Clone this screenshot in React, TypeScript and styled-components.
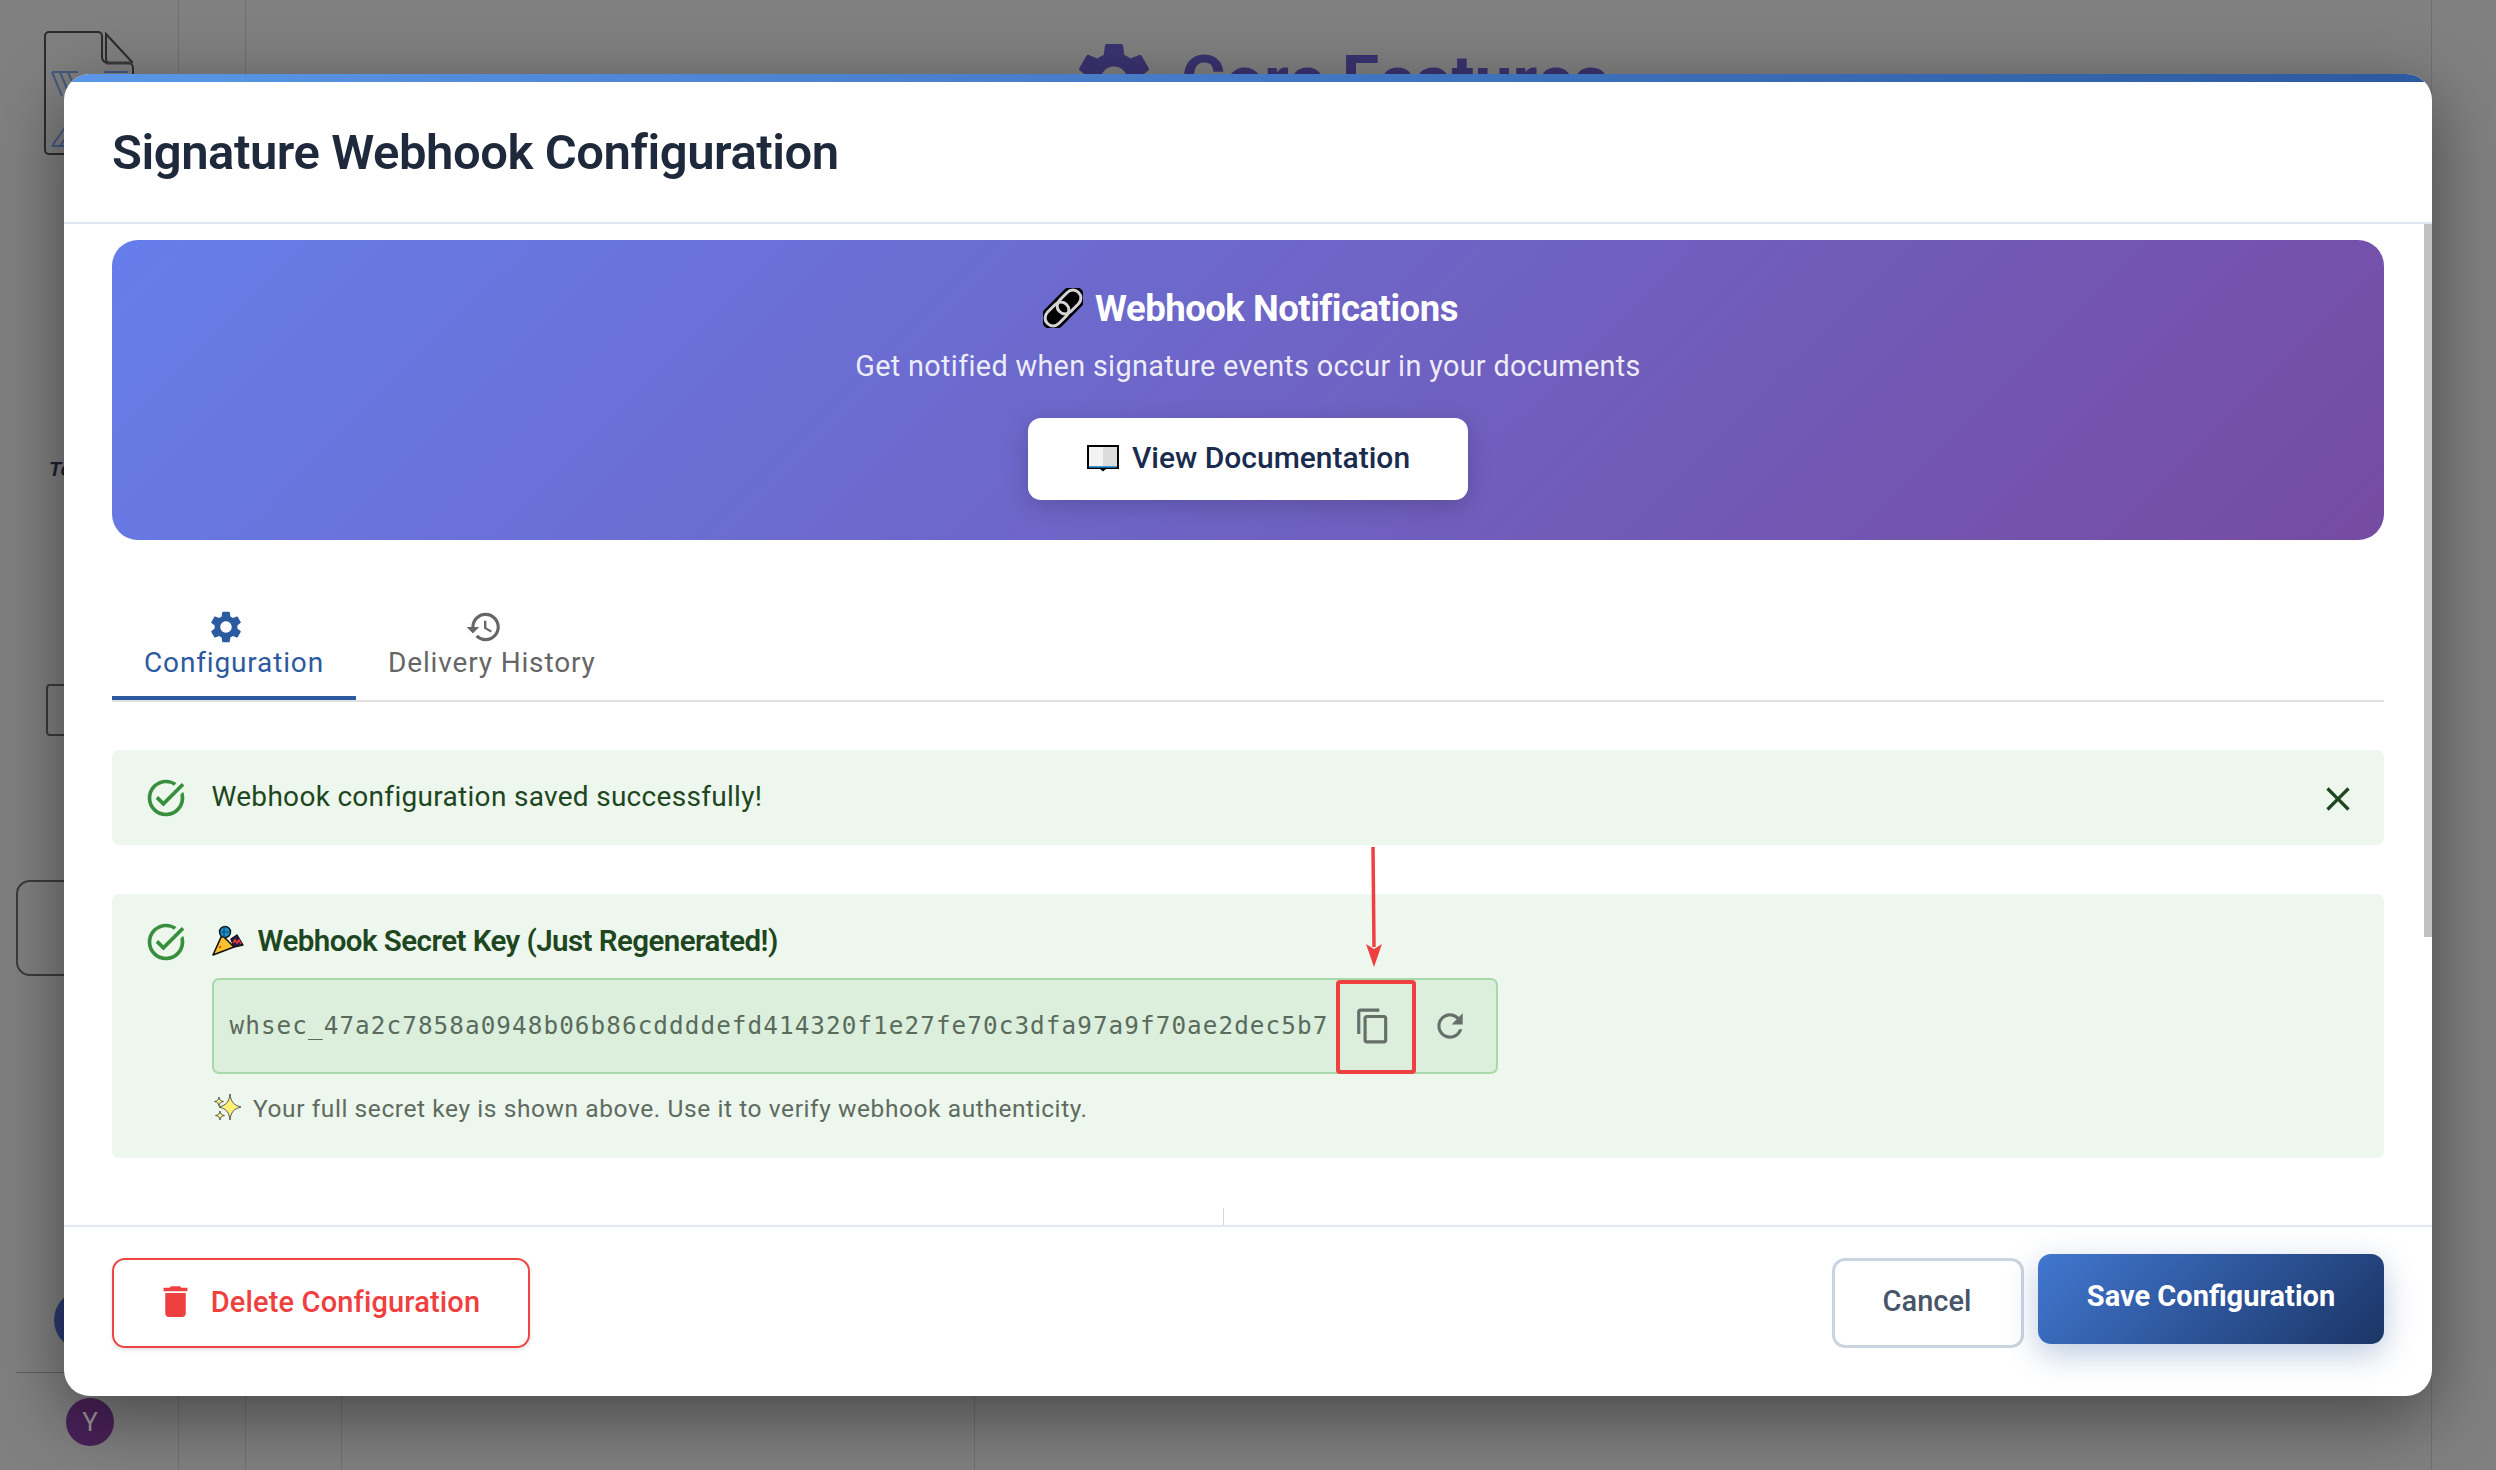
import * as React from "react";
import styled, { createGlobalStyle } from "styled-components";

const SANS = `Roboto, "Liberation Sans", sans-serif`;

const Global = createGlobalStyle`
  html, body { margin: 0; padding: 0; background: #808080; }
  * { box-sizing: border-box; }
`;

const paths = {
  settings:
    "M19.14 12.94c.04-.3.06-.61.06-.94 0-.32-.02-.64-.07-.94l2.03-1.58c.18-.14.23-.41.12-.61l-1.92-3.32c-.12-.22-.37-.29-.59-.22l-2.39.96c-.5-.38-1.03-.7-1.62-.94l-.36-2.54c-.04-.24-.24-.41-.48-.41h-3.84c-.24 0-.43.17-.47.41l-.36 2.54c-.59.24-1.13.57-1.62.94l-2.39-.96c-.22-.08-.47 0-.59.22L2.74 8.87c-.12.21-.08.47.12.61l2.03 1.58c-.05.3-.09.63-.09.94s.02.64.07.94l-2.03 1.58c-.18.14-.23.41-.12.61l1.92 3.32c.12.22.37.29.59.22l2.39-.96c.5.38 1.03.7 1.62.94l.36 2.54c.05.24.24.41.48.41h3.84c.24 0 .44-.17.47-.41l.36-2.54c.59-.24 1.13-.56 1.62-.94l2.39.96c.22.08.47 0 .59-.22l1.92-3.32c.12-.22.07-.47-.12-.61l-2.01-1.58zM12 15.6c-1.98 0-3.6-1.62-3.6-3.6s1.62-3.6 3.6-3.6 3.6 1.62 3.6 3.6-1.62 3.6-3.6 3.6z",
  history:
    "M13 3c-4.97 0-9 4.03-9 9H1l3.89 3.89.07.14L9 12H6c0-3.87 3.13-7 7-7s7 3.13 7 7-3.13 7-7 7c-1.93 0-3.68-.79-4.94-2.06l-1.42 1.42C8.27 19.99 10.51 21 13 21c4.97 0 9-4.03 9-9s-4.03-9-9-9zm-1 5v5l4.28 2.54.72-1.21-3.5-2.08V8H12z",
  taskAlt:
    "M22 5.18 10.59 16.6l-4.24-4.24 1.41-1.41 2.83 2.83 10-10L22 5.18zm-2.21 5.04c.13.57.21 1.17.21 1.78 0 4.42-3.58 8-8 8s-8-3.58-8-8 3.58-8 8-8c1.58 0 3.04.46 4.28 1.25l1.44-1.44C16.1 2.67 14.13 2 12 2 6.48 2 2 6.48 2 12s4.48 10 10 10 10-4.48 10-10c0-1.19-.22-2.33-.6-3.39l-1.61 1.61z",
  close:
    "M19 6.41 17.59 5 12 10.59 6.41 5 5 6.41 10.59 12 5 17.59 6.41 19 12 13.41 17.59 19 19 17.59 13.41 12z",
  copy: "M16 1H4c-1.1 0-2 .9-2 2v14h2V3h12V1zm3 4H8c-1.1 0-2 .9-2 2v14c0 1.1.9 2 2 2h11c1.1 0 2-.9 2-2V7c0-1.1-.9-2-2-2zm0 16H8V7h11v14z",
  refresh:
    "M17.65 6.35C16.2 4.9 14.21 4 12 4c-4.42 0-7.99 3.58-7.99 8s3.57 8 7.99 8c3.73 0 6.84-2.55 7.73-6h-2.08c-.82 2.33-3.04 4-5.65 4-3.31 0-6-2.69-6-6s2.69-6 6-6c1.66 0 3.14.69 4.22 1.78L13 11h7V4l-2.35 2.35z",
  trash: "M6 19c0 1.1.9 2 2 2h8c1.1 0 2-.9 2-2V7H6v12zM19 4h-3.5l-1-1h-5l-1 1H5v2h14V4z",
};

const Icon: React.FC<{ name: keyof typeof paths; size: number; color: string }> = ({ name, size, color }) => (
  <svg width={size} height={size} viewBox="0 0 24 24" fill={color} style={{ flexShrink: 0, display: "block" }}>
    <path d={paths[name]} />
  </svg>
);

const LinkGlyph = () => (
  <svg width="40" height="40" viewBox="0 0 40 40" style={{ display: "block" }}>
    <g transform="rotate(-45 20 20)" fill="none">
      <rect x="-6" y="8" width="52" height="24" rx="12" fill="#000" />
      <rect x="-2" y="12" width="27" height="16" rx="8" stroke="#d4d4d4" strokeWidth="3" />
      <rect x="15" y="12" width="27" height="16" rx="8" stroke="#d4d4d4" strokeWidth="3" />
    </g>
  </svg>
);

const BookGlyph = () => (
  <svg width="34" height="28" viewBox="0 0 34 28" style={{ display: "block" }}>
    <path d="M1 1h32v24H20l-3 2.500-3-2.500H1z" fill="#000" />
    <path d="M3 3h14v19H3z" fill="#f3f3f3" />
    <path d="M17 3h14v19H17z" fill="#dcdcdc" />
    <path d="M3 22h28v1.600H3z" fill="#3b9be0" />
  </svg>
);

const PartyGlyph = () => (
  <svg width="32" height="32" viewBox="0 0 32 32" style={{ display: "block" }}>
    <path d="M10 10 1 30l21-8z" fill="#fbc02d" stroke="#111" strokeWidth="1.6" strokeLinejoin="round" />
    <circle cx="13" cy="7" r="5.500" fill="#1d8fc9" stroke="#111" strokeWidth="1.400" />
    <path d="M12 1v12M7.500 7h11" stroke="#0c4f75" strokeWidth="1.200" />
    <path d="M19 14l6-4 6 10-9 2z" fill="#2a1c4a" stroke="#111" strokeWidth="1.400" strokeLinejoin="round" />
    <path d="M21 18l2-3 2 3 2-3 2 4" fill="none" stroke="#e53935" strokeWidth="1.600" />
    <circle cx="8" cy="22" r="1.200" fill="#e65100" />
  </svg>
);

const SparkGlyph = () => (
  <svg width="30" height="30" viewBox="0 0 30 30" style={{ display: "block" }}>
    <path
      d="M18 1c1 8 3.500 11 11 13-7.500 2-10 5-11 13-1-8-3.500-11-11-13 7.500-2 10-5 11-13z"
      fill="#fff176"
      stroke="#555"
      strokeWidth="1"
    />
    <path d="M7 4c.5 3 1.500 4 4.500 4.500C8.500 9 7.500 10 7 13c-.5-3-1.500-4-4.500-4.500C5.500 8 6.500 7 7 4z" fill="#fff176" stroke="#555" strokeWidth="1" />
    <path d="M8 18c.5 3 1.500 4 4.500 4.500-3 .5-4 1.500-4.500 4.500-.5-3-1.500-4-4.500-4.500 3-.5 4-1.500 4.500-4.500z" fill="#fff176" stroke="#555" strokeWidth="1" />
  </svg>
);

const Page = styled.div`
  position: relative;
  width: 2496px;
  height: 1470px;
  overflow: hidden;
  padding: 74px 64px 0;
  background: #808080;
  font-family: ${SANS};
`;

/* the dimmed page behind the dialog */
const Behind = styled.div`
  position: absolute;
  inset: 0;
`;

const VLine = styled.div<{ $x: number; $top?: number }>`
  position: absolute;
  left: ${(p) => p.$x}px;
  top: ${(p) => p.$top ?? 0}px;
  bottom: 0;
  width: 1px;
  background: #6d7078;
`;

const BgHeading = styled.div`
  position: absolute;
  left: 1181px;
  top: 36px;
  font-size: 68px;
  line-height: 90px;
  font-weight: 700;
  color: #3a3370;
  white-space: nowrap;
`;

const BgGear = styled.div`
  position: absolute;
  left: 1069px;
  top: 35px;
`;

const DocIcon = styled.svg`
  position: absolute;
  left: 40px;
  top: 28px;
`;

const BgBox = styled.div<{ $x: number; $y: number; $w: number; $h: number; $r: number }>`
  position: absolute;
  left: ${(p) => p.$x}px;
  top: ${(p) => p.$y}px;
  width: ${(p) => p.$w}px;
  height: ${(p) => p.$h}px;
  border-radius: ${(p) => p.$r}px;
  border: 2px solid #3b3b3b;
`;

const BgText = styled.div`
  position: absolute;
  left: 49px;
  top: 458px;
  font: italic 700 20px "Liberation Sans", sans-serif;
  color: #1c2230;
`;

const BgBlueDot = styled.div`
  position: absolute;
  left: 54px;
  top: 1290px;
  width: 60px;
  height: 60px;
  border-radius: 50%;
  background: #2c3b70;
`;

const BgRule = styled.div`
  position: absolute;
  left: 16px;
  top: 1372px;
  width: 60px;
  height: 1px;
  background: #5f5f5f;
`;

const Avatar = styled.div`
  position: absolute;
  left: 66px;
  top: 1398px;
  width: 48px;
  height: 48px;
  border-radius: 50%;
  background: #4a2159;
  color: #9a9a9a;
  font-size: 26px;
  display: flex;
  align-items: center;
  justify-content: center;
`;

const Dialog = styled.div`
  position: relative;
  width: 2368px;
  height: 1322px;
  display: flex;
  flex-direction: column;
  background: #fff;
  border-radius: 26px;
  overflow: hidden;
  box-shadow: 0 20px 70px rgba(0, 0, 0, 0.45);
`;

const TopBar = styled.div`
  height: 8px;
  flex-shrink: 0;
  background: linear-gradient(90deg, #5b96e8, #2c5aa0);
`;

const Header = styled.header`
  height: 142px;
  flex-shrink: 0;
  display: flex;
  align-items: center;
  padding: 2px 48px 0;
  border-bottom: 2px solid #e2e8f0;
`;

const Title = styled.h2`
  margin: 0;
  font-size: 49px;
  font-weight: 600;
  letter-spacing: -0.45px;
  color: #1e293b;
  line-height: 1.2;
`;

const Body = styled.div`
  position: relative;
  flex: 1;
  padding: 16px 48px 0;
  overflow: hidden;
`;

const ScrollThumb = styled.div`
  position: absolute;
  top: 0;
  right: 0;
  width: 8px;
  height: 713px;
  background: #c1c1c1;
`;

const Hero = styled.section`
  height: 300px;
  border-radius: 26px;
  background: linear-gradient(135deg, #667eea 0%, #764ba2 100%);
  color: #fff;
  display: flex;
  flex-direction: column;
  align-items: center;
  padding-top: 44px;
`;

const HeroTitle = styled.div`
  display: flex;
  align-items: center;
  gap: 12px;
  height: 48px;
  margin-left: 5px;
  font-size: 36.5px;
  font-weight: 700;
  letter-spacing: -0.5px;
`;

const HeroSub = styled.div`
  margin-top: 12px;
  font-size: 28.8px;
  line-height: 44px;
  letter-spacing: 0.33px;
  color: rgba(255, 255, 255, 0.9);
`;

const DocsButton = styled.div`
  margin-top: 30px;
  width: 440px;
  height: 82px;
  padding-bottom: 3px;
  border-radius: 13px;
  background: #fff;
  color: #1a2c4e;
  font-size: 30px;
  font-weight: 500;
  display: flex;
  align-items: center;
  justify-content: center;
  gap: 12px;
  box-shadow: 0 6px 24px rgba(0, 0, 0, 0.18);
`;

const TabBar = styled.div`
  margin-top: 47px;
  height: 115px;
  display: flex;
  border-bottom: 2px solid #e0e0e0;
`;

const Tab = styled.div<{ $active?: boolean }>`
  height: 113px;
  padding: 21px 32px 0;
  display: flex;
  flex-direction: column;
  align-items: center;
  font-size: 28px;
  line-height: 40px;
  letter-spacing: 0.85px;
  color: ${(p) => (p.$active ? "#2c5aa0" : "#666")};
  border-bottom: ${(p) => (p.$active ? "4px solid #2c5aa0" : "none")};
`;

const TabIcon = styled.div`
  margin: 0 16px -3px 0;
`;

const Alert = styled.div`
  margin-top: 48px;
  height: 95px;
  border-radius: 7px;
  background: #edf7ed;
  color: #1e4620;
  display: flex;
  align-items: flex-start;
  padding: 0 26px 0 32px;
`;

const AlertIcon = styled.div`
  margin-top: 26px;
  margin-right: 23.5px;
`;

const AlertText = styled.div`
  flex: 1;
  margin-top: 28px;
  font-size: 28px;
  line-height: 38px;
  letter-spacing: 0.3px;
`;

const AlertClose = styled.div`
  margin-top: 29px;
`;

const KeyPanel = styled(Alert)`
  height: 264px;
  margin-top: 49px;
`;

const KeyContent = styled.div`
  display: flex;
  flex-direction: column;
`;

const KeyTitle = styled.div`
  margin-top: 27px;
  height: 40px;
  display: flex;
  align-items: center;
  gap: 14px;
  font-size: 29.5px;
  font-weight: 600;
  letter-spacing: -0.55px;
  color: #1e4620;
`;

const KeyBox = styled.div`
  position: relative;
  margin-top: 17px;
  width: 1286px;
  height: 96px;
  display: flex;
  align-items: center;
  padding: 0 0 2px 16px;
  background: #dcefdd;
  border: 2px solid #a9d9ab;
  border-radius: 7px;
`;

const KeyValue = styled.div`
  font-family: "DejaVu Sans Mono", monospace;
  font-size: 24.3px;
  letter-spacing: 1.07px;
  color: #5a6b5c;
  white-space: nowrap;
`;

const KeyAction = styled.div`
  position: absolute;
  top: 0;
  bottom: 0;
  width: 76px;
  display: flex;
  align-items: center;
  justify-content: center;
`;

const CopyAction = styled(KeyAction)`
  left: 1121.5px;
`;

const RefreshAction = styled(KeyAction)`
  left: 1198px;
`;

const Highlight = styled.div`
  position: absolute;
  left: 1122px;
  top: 0;
  width: 80px;
  height: 94px;
  border: 4.5px solid #ef4040;
  border-radius: 4px;
`;

const Arrow = styled.svg`
  position: absolute;
  left: 1146px;
  top: -133px;
`;

const Hint = styled.div`
  margin-top: 17px;
  display: flex;
  align-items: center;
  gap: 11.5px;
  height: 34px;
  font-size: 24.5px;
  letter-spacing: 0.58px;
  color: #5f6b60;
`;

const Tick = styled.div`
  position: absolute;
  left: 1159px;
  bottom: 0;
  width: 1px;
  height: 17px;
  background: #d6d6d6;
`;

const Footer = styled.footer`
  height: 171px;
  flex-shrink: 0;
  border-top: 2px solid #e2e8f0;
  display: flex;
  align-items: flex-start;
  padding: 0 48px;
`;

const DeleteButton = styled.div`
  margin-top: 31px;
  width: 418px;
  height: 90px;
  padding: 0 7px 3px 0;
  border-radius: 13px;
  border: 2.5px solid #ef4444;
  color: #ef4040;
  font-size: 29px;
  font-weight: 500;
  letter-spacing: 0.15px;
  display: flex;
  align-items: center;
  justify-content: center;
  gap: 15px;
  box-shadow: 0 2px 4px rgba(0, 0, 0, 0.12);
`;

const FooterRight = styled.div`
  margin-left: auto;
  display: flex;
  gap: 14px;
  align-items: flex-start;
`;

const CancelButton = styled.div`
  margin-top: 31px;
  width: 192px;
  height: 90px;
  padding: 0 2px 4px 0;
  border-radius: 13px;
  border: 3px solid #cbd5e1;
  color: #475569;
  font-size: 29px;
  font-weight: 500;
  display: flex;
  align-items: center;
  justify-content: center;
`;

const SaveButton = styled.div`
  margin-top: 27px;
  width: 346px;
  height: 90px;
  border-radius: 13px;
  background: linear-gradient(135deg, #4177d0, #1b3566);
  color: #fff;
  font-size: 29px;
  font-weight: 700;
  display: flex;
  align-items: center;
  justify-content: center;
  padding-bottom: 6px;
  box-shadow: 0 10px 32px rgba(44, 90, 160, 0.32);
`;

export default function App() {
  return (
    <Page>
      <Global />
      <Behind>
        <VLine $x={178} />
        <VLine $x={245} />
        <VLine $x={341} $top={1396} />
        <VLine $x={974} $top={1396} />
        <VLine $x={2431} />
        <BgGear>
          <Icon name="settings" size={90} color="#3a3370" />
        </BgGear>
        <BgHeading>Core Features</BgHeading>
        <DocIcon width="96" height="136" viewBox="0 0 96 136" fill="none">
          <path d="M9 4h49a4 4 0 0 1 4 4v21a6 6 0 0 0 6 6h20a5 5 0 0 1 5 5v81a5 5 0 0 1-5 5H9a4 4 0 0 1-4-4V8a4 4 0 0 1 4-4z" stroke="#2c2c2c" strokeWidth="2" />
          <path d="M66 6l26 28a1 1 0 0 1-1 1H70a4 4 0 0 1-4-4z" stroke="#2c2c2c" strokeWidth="2" />
          <path d="M66 35h26" stroke="#3a3a3a" strokeWidth="3" />
          <path d="M12 44h26M12 44l10 24M20 44l10 24M28 44l10 24M12 118l14-20M12 118h20M20 118l14-20M64 44h24" stroke="#465a80" strokeWidth="2" />
        </DocIcon>
        <BgText>To</BgText>
        <BgBox $x={46} $y={684} $w={40} $h={52} $r={4} />
        <BgBox $x={16} $y={880} $w={60} $h={96} $r={14} />
        <BgBlueDot />
        <BgRule />
        <Avatar>Y</Avatar>
      </Behind>

      <Dialog>
        <TopBar />
        <Header>
          <Title>Signature Webhook Configuration</Title>
        </Header>
        <Body>
          <ScrollThumb />
          <Hero>
            <HeroTitle>
              <LinkGlyph />
              Webhook Notifications
            </HeroTitle>
            <HeroSub>Get notified when signature events occur in your documents</HeroSub>
            <DocsButton>
              <BookGlyph />
              View Documentation
            </DocsButton>
          </Hero>

          <TabBar>
            <Tab $active>
              <TabIcon>
                <Icon name="settings" size={38} color="#2c5aa0" />
              </TabIcon>
              Configuration
            </Tab>
            <Tab>
              <TabIcon>
                <Icon name="history" size={38} color="#666" />
              </TabIcon>
              Delivery History
            </Tab>
          </TabBar>

          <Alert>
            <AlertIcon>
              <Icon name="taskAlt" size={44} color="#388e3c" />
            </AlertIcon>
            <AlertText>Webhook configuration saved successfully!</AlertText>
            <AlertClose>
              <Icon name="close" size={40} color="#1e4620" />
            </AlertClose>
          </Alert>

          <KeyPanel>
            <AlertIcon>
              <Icon name="taskAlt" size={44} color="#388e3c" />
            </AlertIcon>
            <KeyContent>
              <KeyTitle>
                <PartyGlyph />
                Webhook Secret Key (Just Regenerated!)
              </KeyTitle>
              <KeyBox>
                <KeyValue>whsec_47a2c7858a0948b06b86cddddefd414320f1e27fe70c3dfa97a9f70ae2dec5b7</KeyValue>
                <CopyAction>
                  <Icon name="copy" size={38} color="#66706a" />
                </CopyAction>
                <RefreshAction>
                  <Icon name="refresh" size={38} color="#66706a" />
                </RefreshAction>
                <Highlight />
                <Arrow width="30" height="120" viewBox="0 0 30 120">
                  <path d="M13 0l1 100" stroke="#ef4040" strokeWidth="3.500" fill="none" />
                  <path d="M6 97l8 5 8-5-8 23z" fill="#ef4040" />
                </Arrow>
              </KeyBox>
              <Hint>
                <SparkGlyph />
                Your full secret key is shown above. Use it to verify webhook authenticity.
              </Hint>
            </KeyContent>
          </KeyPanel>
          <Tick />
        </Body>
        <Footer>
          <DeleteButton>
            <Icon name="trash" size={41} color="#ef4040" />
            Delete Configuration
          </DeleteButton>
          <FooterRight>
            <CancelButton>Cancel</CancelButton>
            <SaveButton>Save Configuration</SaveButton>
          </FooterRight>
        </Footer>
      </Dialog>
    </Page>
  );
}
